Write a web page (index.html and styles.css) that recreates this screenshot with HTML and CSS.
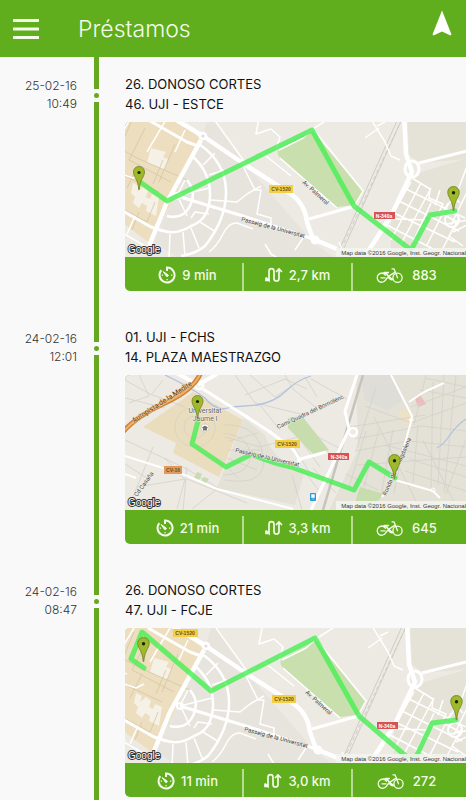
FILE: index.html
```html
<!DOCTYPE html>
<html lang="es">
<head>
<meta charset="utf-8">
<meta name="viewport" content="width=device-width, initial-scale=1">
<title>Préstamos</title>
<link rel="stylesheet" href="styles.css">
</head>
<body>
<svg class="sprites" aria-hidden="true">
  <defs>
    <symbol id="timer" viewBox="0 0 18 18">
      <path d="M9 5V1.500A7.500 7.500 0 1 1 3.300 4.200" fill="none" stroke="#f4fbe9" stroke-width="2"/>
      <path d="M5.200 5.600L10.200 9a1.200 1.200 0 0 1-1.600 1.500z" fill="#f4fbe9" stroke="#f4fbe9"/>
      <path d="M13 8.400h1.300v1.300H13zM3.700 8.400h1.300v1.300h-1.300zM8.400 13h1.300v1.300h-1.300z" fill="#f4fbe9"/>
    </symbol>
    <symbol id="distance" viewBox="0 0 18 16">
      <path d="M4 12V4.200a2.500 2.500 0 0 1 5 0v7.300a2.500 2.500 0 0 0 5 0V3M1 10.500L4 13.500V10.500M17 5L14 2 11 5M1 10.500v3h3" fill="none" stroke="#f4fbe9" stroke-width="1.700"/>
    </symbol>
    <symbol id="bike" viewBox="0 0 27 17">
      <g fill="none" stroke="#f4fbe9" stroke-width="1.300" stroke-linecap="round" stroke-linejoin="round">
        <path d="M9.500 8.300A4.500 4.500 0 1 0 9.500 13.200Q12 9 19.300 5.200M5 6.200Q9 5 11.500 8T17 12.500Q15 13.500 12.800 11L10.500 6M8.500 5.500h4"/>
        <circle cx="21.500" cy="10.800" r="4.600"/>
        <path d="M21.500 10.800L18 1.800h-2M5 10.800h4"/>
      </g>
    </symbol>
    <symbol id="pin" viewBox="0 0 12 24">
      <path d="M6 .5C2.500.500.500 3 .500 6c0 5 4.800 7.500 5.200 17.500h.6C6.700 13.500 11.500 11 11.500 6 11.500 3 9.500.500 6 .500z" fill="#a0b92a" stroke="#6f8426" stroke-width=".8"/>
      <circle cx="6" cy="6.500" r="1.600" fill="#17200a"/>
    </symbol>
    <g id="district">
      <rect x="-10" y="-10" width="365" height="160" fill="#eceae3"/>
      <path d="M85-10L122 44 186 118 214 140H60L28 120 76 18z" fill="#e6e4dd"/>
      <path d="M282-10h80v45l-66 6-12-8zM290 52l66-20v110h-90l0-45z" fill="#e5e3d8"/>
      <path d="M-10-10H48L76 18 26 122-10 95z" fill="#ecdebf"/>
      <path d="M26 26l15 4-3 5 5 2-4 11-17-8zM8 61l6 3-2 6 6-5 5 4-2 6 4 2 2-5 7 3-3 19-10-5 1-5-5-3-3 5-6-5 2-6-4-4z" fill="#f5f1e7"/>
      <path d="M-8 25L12 36l50 22M6 0L-4 24M20 6L4 38l42 22M14 42L2 66M38 38L28 62M-4 86l26 14 8-20M14 90l-7 18M0 54l34 16M50 22L34 60" fill="none" stroke="#d5c6a5" stroke-width=".8"/>
      <path d="M187 8L238 70 229 83 212 85 157 38Q150 32 154 27z" fill="#cadfae"/>
      <g fill="none" stroke="#cbc8c0" stroke-width=".9">
        <path d="M280-10L219 126M276-10L215 126"/>
        <path d="M277-3l-60 128" stroke-dasharray="4 3"/>
      </g>
      <g fill="none" stroke="#fff" stroke-linejoin="round">
        <path stroke-width="4.500" d="M38-10L78 14 122 44 166 72Q180 82 182 100L188 117 212 127M76 18L42 80 24 124M279-10L281 32 287 50 266 94 240 134"/>
        <path stroke-width="3" d="M20-4L62 20 73 24M-4 88L26 105 38 109M52 74L118 94 188 117M184 97L230 84M294 41L350 27"/>
        <path stroke-width="2.500" d="M74 22Q100 40 101 68T80 124Q70 132 56 134M66 33Q86 50 85 74T66 104Q50 114 36 108M62 58Q72 70 65 84T42 94"/>
        <path stroke-width="1.500" d="M-4 52L8 56 16 52M-6 40l5 2M6-4L-6 16M42-4L22 30M60 8L50 30M-4 110L20 124M10 94L2 112M52 74L84 66M53 75L62 94M52 74L60 58M84 53L99 48M78 43L90 31M86 78L112 80 122 72 136 64M75 100L91 110M66 106L74 126M58 110L60 134M45 112L44 136M66 96L70 90 84 92M118 44L130 68 136 68 132 92 146 96V103M124 46L88-4M128 107L112 101Q104 100 98 112T84 130M140 122l6 10 14 8M134-4l-3 16 15-5 9 8-4 13M154 28l24-12 10-9L214-10M188 7L238 69l-8 14M155 36l57 50M166 54L136 30"/>
        <path stroke-width="1.500" d="M244-6L260 20 266 34 275 38M252 4l8-4M240 16l14-10M287 56L305 67 304 76 318 82 314 90 332 100 324 114 338 124M286 60L258 109M296 61L266 118M306 66L276 122M279 66L340 96M272 78L334 109M267 90L330 120M260 102L310 128M247 96L300 98M315 68l-5 15M306 81l-18 39M323 81l-21 42M334 96l-16 30M319 89l14-21 17-45M325 71l10 10M346 62L326 103M322 102l20-4M328 110l16-8M178 116l-8 12M214 120l6 14"/>
        <ellipse cx="287" cy="47" rx="7" ry="8" stroke-width="3"/>
        <circle cx="78" cy="14" r="3" stroke-width="2.500"/><circle cx="52" cy="74" r="3" stroke-width="2"/><circle cx="190" cy="118" r="3" stroke-width="3"/><circle cx="327" cy="98" r="7" stroke-width="2"/>
      </g>
      <circle cx="78" cy="14" r="1.500" fill="#dedbd3"/>
      <text transform="translate(116 99) rotate(15)" class="street">Passeig de la Universitat</text>
      <text transform="translate(177 61) rotate(42)" class="street">Av. Palmeral</text>
      <rect x="144" y="63" width="24" height="8" fill="#f2cf45"/><text class="shield shield-dark" x="156" y="69">CV-1520</text>
      <rect x="249" y="90" width="21" height="7" fill="#d75252"/><text class="shield" x="259" y="96">N-340a</text>
    </g>
    <g id="credits">
      <rect x="211" y="126" width="130" height="9" fill="#f5f4f0" opacity=".85"/>
      <text class="attribution" x="341" y="133">Map data ©2016 Google, Inst. Geogr. Nacional</text>
      <text class="google" x="3" y="131">Google</text>
    </g>
  </defs>
</svg>

<header class="topbar">
  <button class="icon-button" type="button" aria-label="Menú"><svg width="26" height="20" viewBox="0 0 26 20"><path d="M0 1.500h26M0 10h26M0 18.500h26" stroke="#f4fbe9" stroke-width="3"/></svg></button>
  <h1 class="title">Préstamos</h1>
  <button class="icon-button locate" type="button" aria-label="Ubicación"><svg width="20" height="26" viewBox="0 0 20 26"><path d="M10 0.500L19.500 24.500 18.500 25.500 10 21.500 1.500 25.500.500 24.500z" fill="#fff"/></svg></button>
</header>

<main class="timeline">
  <article class="entry">
    <time class="when" datetime="2016-02-25T10:49">25-02-16<br>10:49</time>
    <div class="rail"><span class="dot"></span></div>
    <div class="trip">
      <h2 class="stations">26. DONOSO CORTES<br>46. UJI - ESTCE</h2>
      <div class="card">
        <svg class="map" viewBox="0 0 341 135" preserveAspectRatio="xMidYMid slice">
          <use href="#district"/>
          <path class="route" d="M15 60L42 79 187 8 229 84 286 128 305 93 330 89"/>
          <use href="#pin" x="8" y="44" width="12" height="24"/>
          <use href="#pin" x="322" y="64" width="13" height="25"/>
          <use href="#credits"/>
        </svg>
        <div class="stats">
          <span class="stat stat-time"><svg width="18" height="18"><use href="#timer"/></svg>9 min</span>
          <span class="stat"><svg width="18" height="16"><use href="#distance"/></svg>2,7 km</span>
          <span class="stat stat-bike"><svg width="27" height="17"><use href="#bike"/></svg>883</span>
        </div>
      </div>
    </div>
  </article>

  <article class="entry">
    <time class="when" datetime="2016-02-24T12:01">24-02-16<br>12:01</time>
    <div class="rail"><span class="dot"></span></div>
    <div class="trip">
      <h2 class="stations">01. UJI - FCHS<br>14. PLAZA MAESTRAZGO</h2>
      <div class="card">
        <svg class="map" viewBox="0 0 341 135" preserveAspectRatio="xMidYMid slice">
          <rect width="341" height="135" fill="#eceae3"/>
          <path d="M231 0h110v135H204L233 75zM119 43L140 60Q150 90 180 95L170 130 92 113z" fill="#e4e1d7"/>
          <path d="M18 52L68 17 118 45 94 102 48 78 51 68z" fill="#e9ddbd"/>
          <path d="M235 0h32l10 26-15 9-22-10z" fill="#deddd8"/>
          <path d="M163 43l14-2 27 34-15 5-26-27zM235 112l24 7-11 12-18-3zM72 97l5 2-3 6-5-2zM79 102l5 2-3 4-5-3z" fill="#c7ddad"/>
          <path d="M290 23l5-3 6 9-8 3z" fill="#edbabb"/><path d="M276 35l7-2 7 12-8 6-8-8z" fill="#eee2c5"/>
          <g fill="none" stroke="#d4d1ca" stroke-width=".8">
            <path d="M0 5l25 14 35 13M0 23l40 10M14 0l10 21-20 7M38 5L26 20M110 0l20 28 50 12M125 0l25 22 20-13M120 20l40-16 22 10M135 30l20 25M160 0l8 14 25 20M180 2l12 20M186 4l36 20M0 65l60 28 33 20M12 112l48-8-8 30M0 89l25 16M40 83l20 22M28 72l-20 50M62 92l-4 43M92 114l-25 20M62 104l60 24M100 62l35 10 38-10M175 64l20 28M165 66l20 32M191 61l23 12M188 93l23 25M180 97l15 20M167 100l10 35"/>
            <circle cx="70" cy="52" r="20"/><circle cx="70" cy="52" r="11"/>
            <path d="M98 50Q133 48 138 80T100 105M98 58Q124 61 125 80T98 100M104 66l29-8M103 75h34M102 83l30 12M100 90l14 14"/>
            <path d="M225 52l75-12M230 64l67-13 44 5M230 76l54-10 57 6M232 90l109-8M260 70l81 21M285 84l56 18M280 96l61 20M286 32l55-20M286 48l55-20M295 15l46 8M300 3l41 9M301 0l-12 50M319 0l-6 110M331 0l-12 117M308 7l-2 107M293 50l-5 58M281 60l-12 58M268 54l-12 67M254 54l-15 58M241 56l-17 56M240 31l44 16M251 12l-20 64M249 42l42 84M221 99l32 16M298 65l32 64M341 64l-20 55"/>
          </g>
          <path d="M40 0Q65 12 80 23Q92 38 106 32L132 30Q150 27 161 16T186 1M341 44Q332 50 325 60T312 73" fill="none" stroke="#b3c2df" stroke-width="1.300"/>
          <path d="M238 0L198 135" stroke="#c6c3bd" stroke-width="2.500"/>
          <g fill="none" stroke="#fff" stroke-linejoin="round">
            <path stroke-width="4" d="M48-4L68 7M73 10L92-1"/>
            <path stroke-width="3" d="M78 14L122 42 145 57 168 74 175 85 170 92M232 0L220 36 224 54 206 93 186 135M172 85L201 77"/>
            <path stroke-width="2" d="M266 0L287 41 286 47 276 82 264 110 257 122M270 105L308 116 315 123M0 81L60 100 92 114 168 134M0 99l11 4M284 27l15-10 20-9"/>
            <circle cx="74" cy="10" r="4" stroke-width="2.500"/><circle cx="228" cy="57" r="4" stroke-width="2.500"/><circle cx="122" cy="42" r="1.500"/><circle cx="145" cy="57" r="1.500"/><circle cx="286" cy="45" r="1.500"/><circle cx="308" cy="115" r="2"/>
          </g>
          <path d="M-3 58Q10 42 40 28T76-3" fill="none" stroke="#ce8237" stroke-width="5"/>
          <path d="M-3 58Q10 42 40 28T76-3" fill="none" stroke="#f0b162" stroke-width="2"/>
          <path class="route" d="M73 46L67 69 101 92 127 79M126 79Q147 88 166 92L229 115 244 87 270 103"/>
          <text class="highway" transform="translate(9 48) rotate(-33)">Autopista de la Medite</text>
          <text class="street" transform="translate(153 54) rotate(-25)">Camí Quadra del Borriolenc</text>
          <text class="street" transform="translate(110 77) rotate(13)">Passeig de la Universitat</text>
          <text class="street" transform="translate(12 122) rotate(-54)">Cd Casaña</text>
          <text class="street" transform="translate(261 121) rotate(-66)">Ronda de la Magdalena</text>
          <text class="place" x="80" y="38">Universitat</text><text class="place" x="80" y="46">Jaume I</text>
          <circle cx="80" cy="53" r="4" fill="#fff" stroke="#bbb3a3" stroke-width=".5"/><path d="M77 52.500l3-2 3 2-1 1v2h-4v-2z" fill="#77736b"/>
          <rect x="150" y="65" width="25" height="8" fill="#f2cf45"/><text class="shield shield-dark" x="162" y="71">CV-1520</text>
          <rect x="203" y="78" width="21" height="7" fill="#d75252"/><text class="shield" x="214" y="84">N-340a</text>
          <rect x="39" y="91" width="18" height="8" fill="#e3995d"/><text class="shield shield-dark" x="48" y="97">CV-16</text>
          <rect x="185" y="118" width="6" height="8" rx="1" fill="#229bd7"/><path d="M186.500 119.500h3v3h-3zM186.500 124h3" fill="#fff" stroke="#fff" stroke-width=".5"/>
          <use href="#pin" x="66" y="20" width="13" height="24"/>
          <use href="#pin" x="263" y="79" width="13" height="25"/>
          <use href="#credits"/>
        </svg>
        <div class="stats">
          <span class="stat stat-time"><svg width="18" height="18"><use href="#timer"/></svg>21 min</span>
          <span class="stat"><svg width="18" height="16"><use href="#distance"/></svg>3,3 km</span>
          <span class="stat stat-bike"><svg width="27" height="17"><use href="#bike"/></svg>645</span>
        </div>
      </div>
    </div>
  </article>

  <article class="entry">
    <time class="when" datetime="2016-02-24T08:47">24-02-16<br>08:47</time>
    <div class="rail"><span class="dot"></span></div>
    <div class="trip">
      <h2 class="stations">26. DONOSO CORTES<br>47. UJI - FCJE</h2>
      <div class="card">
        <svg class="map" viewBox="0 0 341 135" preserveAspectRatio="xMidYMid slice">
          <use href="#district" transform="translate(3 4)"/>
          <rect x="48" y="1" width="25" height="8" fill="#f2cf45"/><text class="shield shield-dark" x="60" y="7">CV-1520</text>
          <path class="route" d="M19 40L6 31 17 4 86 63 190 10 234 88 282 129H291L307 95 331 92"/>
          <use href="#pin" x="12" y="9" width="13" height="25"/>
          <use href="#pin" x="325" y="67" width="13" height="25"/>
          <use href="#credits"/>
        </svg>
        <div class="stats">
          <span class="stat stat-time"><svg width="18" height="18"><use href="#timer"/></svg>11 min</span>
          <span class="stat"><svg width="18" height="16"><use href="#distance"/></svg>3,0 km</span>
          <span class="stat stat-bike"><svg width="27" height="17"><use href="#bike"/></svg>272</span>
        </div>
      </div>
    </div>
  </article>
</main>
</body>
</html>
```
FILE: styles.css
```css
* { box-sizing: border-box; }
body { margin: 0; background: #f9f9f9; color: #111; font-family: Roboto, "Liberation Sans", sans-serif; }
.sprites { position: absolute; width: 0; height: 0; }

.topbar { display: flex; align-items: center; height: 57px; padding: 0 14px 0 13px; background: #60ae1d; }
.icon-button { display: block; padding: 0; border: 0; background: none; }
.icon-button svg { display: block; }
.title { flex: 1; margin: 0 0 0 39px; color: #f4fbe9; font: 300 23px/30px Inter, sans-serif; }
.locate { align-self: flex-start; margin-top: 10px; }

.entry { display: grid; grid-template-columns: 77px 39px minmax(0, 1fr); }
.when { padding-top: 20px; color: #333; font: 300 12px/18px Inter, sans-serif; text-align: right; }
.rail { display: flex; flex-direction: column; align-items: center; }
.rail::before { content: ""; width: 5px; height: 32px; background: #66a822; }
.rail::after { content: ""; flex: 1; width: 5px; background: #66a822; }
.dot { width: 5px; height: 5px; margin: 4px 0; border-radius: 50%; background: #66a822; }
.trip { padding: 17px 0 19px 9px; }
.entry:last-child .trip { padding-bottom: 3px; }
.stations { margin: 0 0 8px; font: 400 13px/20px Inter, sans-serif; }

.card { overflow: hidden; border-radius: 5px 0 0 5px; background: #60ae1d; }
.map { display: block; width: 100%; height: 135px; }
.route { fill: none; stroke: #46ef52; stroke-width: 5; stroke-opacity: .8; stroke-linejoin: round; stroke-linecap: round; }
.street, .highway, .place { font-family: Roboto, sans-serif; font-size: 7px; fill: #444; paint-order: stroke; stroke: #f3f1ea; stroke-width: 1px; }
.street { font-size: 6px; }
.highway { fill: #5e3510; stroke: #f3cf9b; }
.place { text-anchor: middle; fill: #666; }
.shield { font: 700 5px "Liberation Sans", sans-serif; text-anchor: middle; fill: #fff; }
.shield-dark { fill: #6b5318; }
.attribution { font: 6px "Liberation Sans", sans-serif; text-anchor: end; fill: #333; }
.google { font: 10px "Liberation Sans", sans-serif; fill: #fff; stroke: #333; stroke-width: 2px; paint-order: stroke; }

.stats { display: grid; grid-template-columns: 117fr 109fr 115fr; height: 34px; padding-top: 6px; color: #f4fbe9; font: 500 13px/24px Inter, sans-serif; }
.stat { display: flex; align-items: center; justify-content: center; gap: 6px; white-space: nowrap; padding-bottom: 4px; }
.stat + .stat { border-left: 2px solid #b9dc93; }
.stat-time { padding-left: 8px; }
.stat-bike { gap: 9px; padding-right: 6px; }
```
